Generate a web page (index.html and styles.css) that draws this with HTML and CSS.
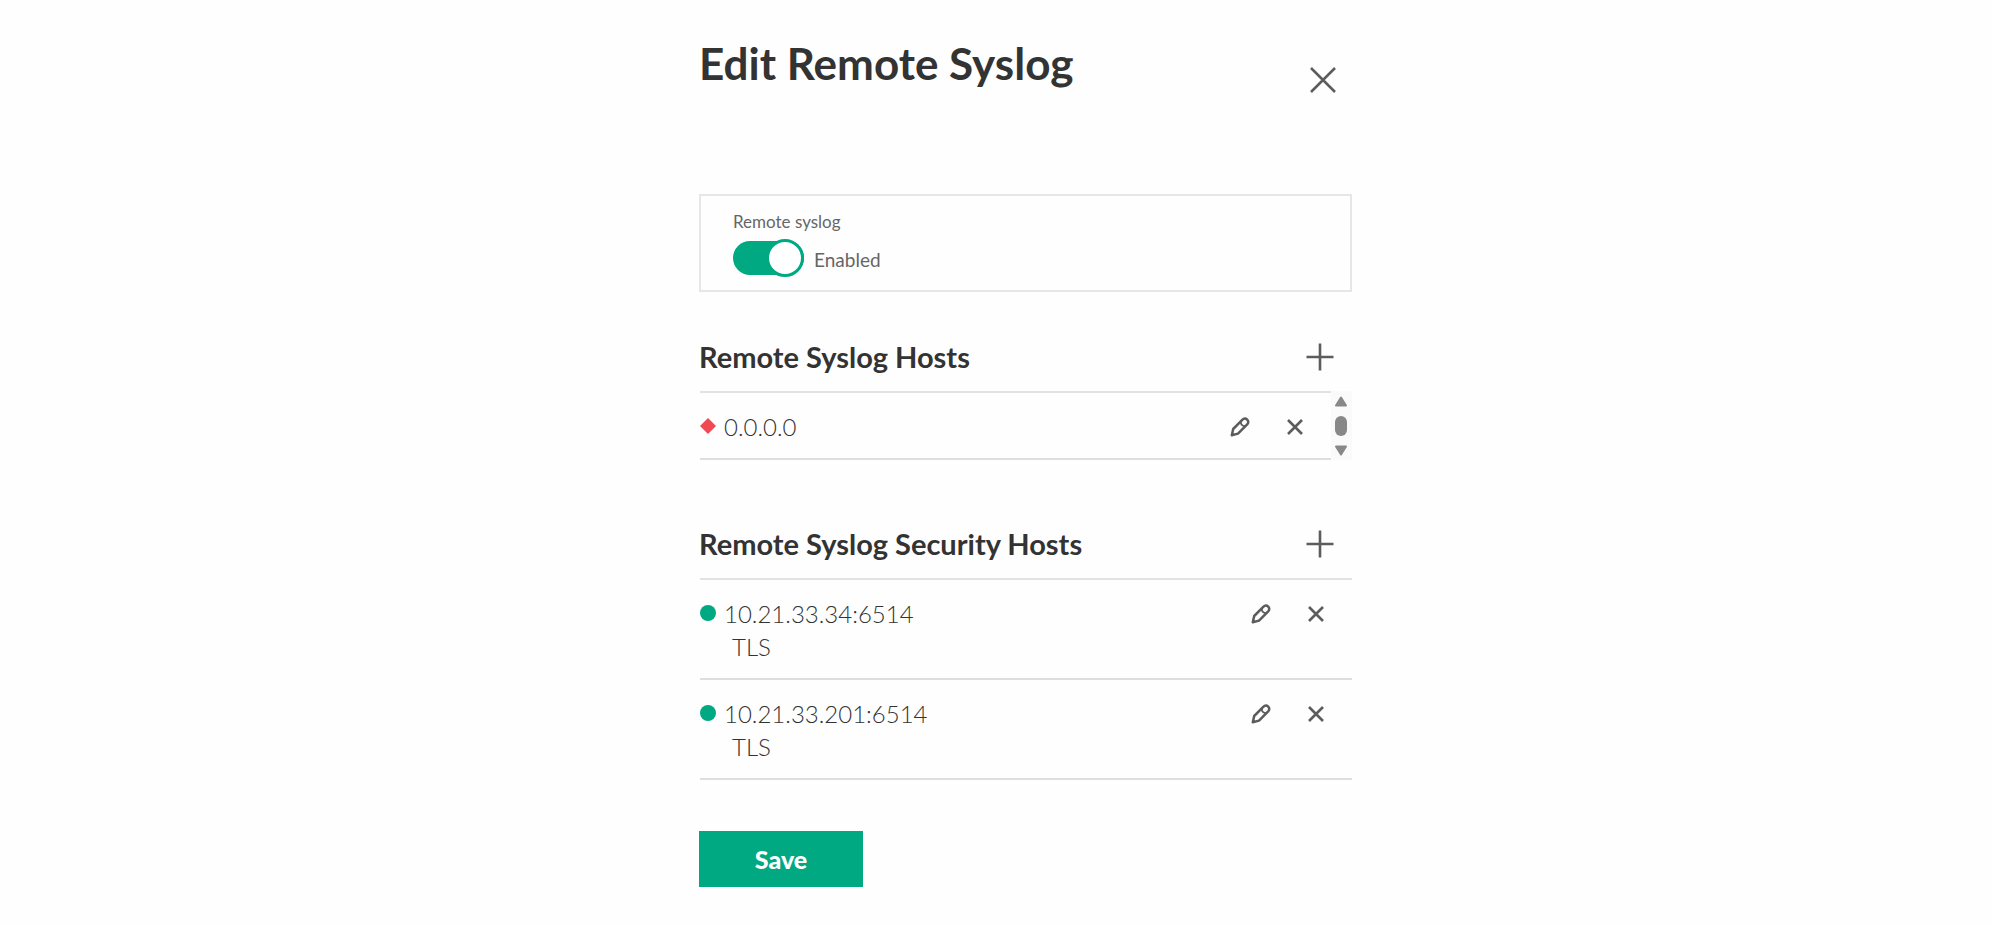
FILE: index.html
```
<!DOCTYPE html>
<html lang="en">
<head>
<meta charset="utf-8">
<meta name="viewport" content="width=device-width, initial-scale=1">
<title>Edit Remote Syslog</title>
<link rel="stylesheet" href="styles.css">
</head>
<body>
<svg width="0" height="0" class="sprite" aria-hidden="true">
  <symbol id="plus" viewBox="0 0 28 28"><path d="M14 0.5v27M0.5 14h27" stroke-width="2.6"/></symbol>
  <symbol id="remove" viewBox="0 0 16 16"><path d="M1 1l14 14M15 1L1 15" stroke-width="2.6"/></symbol>
  <symbol id="pencil" viewBox="0 0 20 20"><path d="M1.800 18.200l1.400-6.200 9.300-9.300c1.400-1.500 3.300-1.500 4.700-.1s1.400 3.300 0 4.700L8 16.600z" stroke-width="2.500" stroke-linejoin="round"/><path d="M10.800 4.800c-.2 2.600 1.500 4.400 4.300 4.300" stroke-width="1.800"/></symbol>
</svg>
<main class="page">
  <form class="panel">
    <header class="panel-header">
      <h1 class="title">Edit Remote Syslog</h1>
      <button class="icon-button close" type="button" aria-label="Close">
        <svg class="icon" width="26" height="26" viewBox="0 0 26 26"><path d="M1 1l24 24M25 1L1 25" stroke-width="2.5"/></svg>
      </button>
    </header>

    <div class="setting">
      <label class="setting-label" for="enabled">Remote syslog</label>
      <div class="setting-control">
        <input class="switch" id="enabled" type="checkbox" role="switch" checked>
        <span class="setting-state">Enabled</span>
      </div>
    </div>

    <section class="hosts">
      <div class="section-header">
        <h2 class="section-title">Remote Syslog Hosts</h2>
        <button class="icon-button" type="button" aria-label="Add host"><svg class="icon" width="28" height="28"><use href="#plus"/></svg></button>
      </div>
      <div class="scroll-area">
        <ul class="host-list">
          <li class="host">
            <svg class="status" width="16" height="16" viewBox="0 0 16 16" role="img" aria-label="Critical"><path class="critical" d="M8 0l8 8-8 8-8-8z"/></svg>
            <div class="host-text"><span>0.0.0.0</span></div>
            <div class="actions">
              <button class="icon-button" type="button" aria-label="Edit 0.0.0.0"><svg class="icon" width="20" height="20"><use href="#pencil"/></svg></button>
              <button class="icon-button" type="button" aria-label="Remove 0.0.0.0"><svg class="icon" width="16" height="16"><use href="#remove"/></svg></button>
            </div>
          </li>
        </ul>
        <div class="scrollbar" aria-hidden="true">
          <svg width="14" height="11" viewBox="0 0 14 11"><path d="M7 1.500L12 9.500H2z" stroke="#888" stroke-width="2" stroke-linejoin="round"/></svg>
          <span class="thumb"></span>
          <svg width="14" height="11" viewBox="0 0 14 11"><path d="M7 9.500L2 1.500h10z" stroke="#888" stroke-width="2" stroke-linejoin="round"/></svg>
        </div>
      </div>
    </section>

    <section class="hosts secure">
      <div class="section-header">
        <h2 class="section-title">Remote Syslog Security Hosts</h2>
        <button class="icon-button" type="button" aria-label="Add security host"><svg class="icon" width="28" height="28"><use href="#plus"/></svg></button>
      </div>
      <ul class="host-list">
        <li class="host">
          <svg class="status" width="16" height="16" viewBox="0 0 16 16" role="img" aria-label="OK"><circle class="ok" cx="8" cy="8" r="8"/></svg>
          <div class="host-text"><span>10.21.33.34:6514</span><span class="protocol">TLS</span></div>
          <div class="actions">
            <button class="icon-button" type="button" aria-label="Edit 10.21.33.34"><svg class="icon" width="20" height="20"><use href="#pencil"/></svg></button>
            <button class="icon-button" type="button" aria-label="Remove 10.21.33.34"><svg class="icon" width="16" height="16"><use href="#remove"/></svg></button>
          </div>
        </li>
        <li class="host">
          <svg class="status" width="16" height="16" viewBox="0 0 16 16" role="img" aria-label="OK"><circle class="ok" cx="8" cy="8" r="8"/></svg>
          <div class="host-text"><span>10.21.33.201:6514</span><span class="protocol">TLS</span></div>
          <div class="actions">
            <button class="icon-button" type="button" aria-label="Edit 10.21.33.201"><svg class="icon" width="20" height="20"><use href="#pencil"/></svg></button>
            <button class="icon-button" type="button" aria-label="Remove 10.21.33.201"><svg class="icon" width="16" height="16"><use href="#remove"/></svg></button>
          </div>
        </li>
      </ul>
    </section>

    <button class="save" type="submit">Save</button>
  </form>
</main>
</body>
</html>
```
FILE: styles.css
```
*, *::before { box-sizing: border-box; }

body {
  margin: 0;
  background: #fefefe;
  color: #333;
  font-family: Lato, "Open Sans", sans-serif;
}

.sprite { display: block; }

.page {
  display: grid;
  grid-template-columns: 699fr minmax(480px, 653fr) 641fr;
  padding: 31px 0 40px;
}

.panel { grid-column: 2; }

.panel-header {
  display: flex;
  justify-content: space-between;
  align-items: flex-start;
  padding: 0 16px 0 0;
  margin-bottom: 99px;
}

.title {
  margin: 0;
  font-size: 44px;
  line-height: 64px;
  font-weight: 700;
}

.icon-button {
  display: flex;
  padding: 0;
  border: 0;
  background: none;
  cursor: pointer;
}

.icon {
  fill: none;
  stroke: #5c5c5c;
}

.close { margin-top: 36px; }

.setting {
  padding: 14px 32px 12px;
  border: 2px solid #e6e6e6;
  color: #666;
}

.setting-label {
  display: block;
  font-size: 17px;
  line-height: 24px;
}

.setting-control {
  display: flex;
  align-items: center;
  gap: 10px;
  margin-top: 4px;
}

.setting-state {
  padding-top: 4px;
  font-size: 19px;
  line-height: 24px;
}

.switch {
  display: flex;
  align-items: center;
  justify-content: flex-end;
  width: 71px;
  height: 34px;
  margin: 3px 0;
  appearance: none;
  border-radius: 17px;
  background: #01a982;
}

.switch::before {
  content: "";
  flex: none;
  width: 38px;
  height: 38px;
  border: 3px solid #01a982;
  border-radius: 50%;
  background: #fff;
}

.hosts { margin-top: 43px; }
.hosts.secure { margin-top: 62px; }

.section-header {
  display: flex;
  align-items: center;
  justify-content: space-between;
  height: 56px;
  padding: 0 18px 12px 0;
}

.section-title {
  margin: 0;
  font-size: 29px;
  line-height: 44px;
  font-weight: 700;
}

.host-list {
  flex: 1;
  margin: 0 0 0 1px;
  padding: 0;
  list-style: none;
  border-top: 2px solid #e2e2e2;
}

.host {
  display: flex;
  align-items: flex-start;
  gap: 8px;
  padding: 17px 28px 15px 0;
  border-bottom: 2px solid #dedede;
  font-size: 24px;
  line-height: 33px;
  font-weight: 300;
}

.status { flex: none; margin-top: 8px; }
.critical { fill: #f04953; }
.ok { fill: #01a982; }

.host-text {
  display: flex;
  flex: 1;
  flex-direction: column;
}

.protocol { padding-left: 8px; }

.actions {
  display: flex;
  align-items: center;
  gap: 37px;
  height: 33px;
}

.scroll-area { display: flex; }

.scrollbar {
  display: flex;
  flex-direction: column;
  align-items: center;
  justify-content: space-between;
  width: 21px;
  padding: 5px 1px 4px 0;
  background: #fafafa;
  fill: #888;
}

.thumb {
  width: 12px;
  height: 20px;
  border-radius: 6px;
  background: #888;
}

.save {
  display: block;
  width: 164px;
  height: 56px;
  margin: 51px 0 0;
  padding: 0;
  border: 0;
  background: #01a982;
  color: #fff;
  font: 900 25px/56px Lato, "Open Sans", sans-serif;
  cursor: pointer;
}
```
